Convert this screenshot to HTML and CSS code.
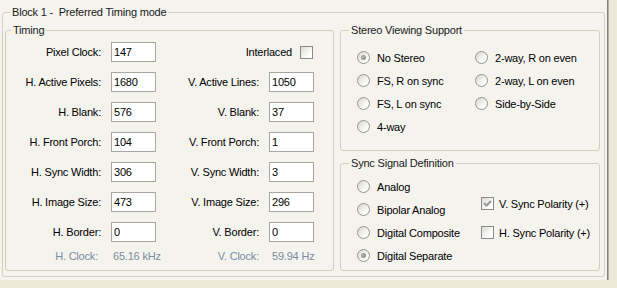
FILE: index.html
```html
<!DOCTYPE html>
<html lang="en">
<head>
    <meta charset="UTF-8">
    <title>Preferred Timing mode</title>
    <link rel="stylesheet" href="styles.css">
</head>
<body>
    <div class="page">
        <fieldset class="group outer">
            <legend>Block 1 -&nbsp; Preferred Timing mode</legend>
            <div class="outer-body">
                <fieldset class="group timing">
                    <legend>Timing</legend>
                    <div class="timing-grid">
                        <label>Pixel Clock:</label>
                        <input type="text" value="147">
                        <div class="interlaced">Interlaced <span class="check"></span></div>

                        <label>H. Active Pixels:</label>
                        <input type="text" value="1680">
                        <label>V. Active Lines:</label>
                        <input type="text" value="1050">

                        <label>H. Blank:</label>
                        <input type="text" value="576">
                        <label>V. Blank:</label>
                        <input type="text" value="37">

                        <label>H. Front Porch:</label>
                        <input type="text" value="104">
                        <label>V. Front Porch:</label>
                        <input type="text" value="1">

                        <label>H. Sync Width:</label>
                        <input type="text" value="306">
                        <label>V. Sync Width:</label>
                        <input type="text" value="3">

                        <label>H. Image Size:</label>
                        <input type="text" value="473">
                        <label>V. Image Size:</label>
                        <input type="text" value="296">

                        <label>H. Border:</label>
                        <input type="text" value="0">
                        <label>V. Border:</label>
                        <input type="text" value="0">

                        <span class="clock clock-label h">H. Clock:</span>
                        <span class="clock clock-value">65.16 kHz</span>
                        <span class="clock clock-label">V. Clock:</span>
                        <span class="clock clock-value v">59.94 Hz</span>
                    </div>
                </fieldset>

                <div class="side">
                    <fieldset class="group stereo">
                        <legend>Stereo Viewing Support</legend>
                        <div class="stereo-grid">
                            <div class="opt"><span class="radio on"></span>No Stereo</div>
                            <div class="opt"><span class="radio"></span>2-way, R on even</div>
                            <div class="opt"><span class="radio"></span>FS, R on sync</div>
                            <div class="opt"><span class="radio"></span>2-way, L on even</div>
                            <div class="opt"><span class="radio"></span>FS, L on sync</div>
                            <div class="opt"><span class="radio"></span>Side-by-Side</div>
                            <div class="opt"><span class="radio"></span>4-way</div>
                        </div>
                    </fieldset>

                    <fieldset class="group sync">
                        <legend>Sync Signal Definition</legend>
                        <div class="sync-body">
                            <div class="sync-radios">
                                <div class="opt"><span class="radio"></span>Analog</div>
                                <div class="opt"><span class="radio"></span>Bipolar Analog</div>
                                <div class="opt"><span class="radio"></span>Digital Composite</div>
                                <div class="opt"><span class="radio on"></span>Digital Separate</div>
                            </div>
                            <div class="sync-checks">
                                <div class="chk"><span class="check on"><svg width="11" height="11" viewBox="0 0 11 11"><polyline points="2,5 4.5,7.5 9,3" fill="none" stroke="#9a9a96" stroke-width="2"/></svg></span>V. Sync Polarity (+)</div>
                                <div class="chk"><span class="check"></span>H. Sync Polarity (+)</div>
                            </div>
                        </div>
                    </fieldset>
                </div>
            </div>
        </fieldset>
    </div>
</body>
</html>
```

FILE: styles.css
```css
body {
    margin: 0;
    background: #ece9d8;
    font-family: 'Liberation Sans', Arial, sans-serif;
    font-size: 11px;
    letter-spacing: -0.2px;
    color: #000;
}
.page {
    width: 607px;
    height: 280px;
    box-sizing: border-box;
    padding: 6px 0 0 2px;
    background: #f4f3ee;
    box-shadow: 1px 0 0 #808080, 2px 0 0 #b0aea4, 0 1px 0 #d6d3c8, 0 2px 0 #a5a39a;
}

/* group boxes */
.group {
    margin: 0;
    padding: 0;
    min-width: 0;
    box-sizing: border-box;
    border: 1px solid #d0d0bf;
    border-radius: 3px;
}
.group legend {
    padding: 0 2px;
    line-height: 13px;
    color: #1a1a1a;
}
.outer { width: 603px; height: 271px; }
.outer legend { margin-left: 7px; }
.outer-body {
    display: flex;
    gap: 6px;
    padding: 5px 4px 0 2px;
}
.timing { width: 329px; height: 247px; }
.timing legend { margin-left: 5px; }
.side {
    display: flex;
    flex-direction: column;
    gap: 6px;
    width: 260px;
}
.stereo { height: 127px; }
.sync { height: 114px; }
.stereo legend, .sync legend { margin-left: 8px; }

/* timing fields */
.timing-grid {
    display: grid;
    grid-template-columns: 95px 45px 93px 45px;
    grid-template-rows: repeat(7, 20px) 14px;
    column-gap: 10px;
    row-gap: 10px;
    padding-top: 5px;
    align-items: center;
}
.timing-grid label { text-align: right; white-space: nowrap; }
.timing-grid input {
    width: 45px;
    height: 20px;
    box-sizing: border-box;
    margin: 0;
    padding: 0 2px;
    border: 1px solid #a9a8a0;
    background: #fff;
    font-family: inherit;
    font-size: 11px;
    letter-spacing: -0.2px;
    color: #000;
    outline: none;
}
.interlaced {
    grid-column: 3 / 5;
    display: flex;
    justify-content: flex-end;
    align-items: center;
    gap: 8px;
    padding-right: 1px;
}
.clock {
    color: #7a8ca2;
    white-space: nowrap;
    margin-top: -6px;
}
.clock-label { text-align: right; }
.clock-label.h { padding-right: 3px; }
.clock-value { padding-left: 2px; }
.clock-value.v { padding-left: 3px; }

/* radios and checks */
.opt, .chk {
    display: flex;
    align-items: center;
    white-space: nowrap;
}
.opt { height: 23px; }
.radio {
    width: 13px;
    height: 13px;
    box-sizing: border-box;
    margin-right: 7px;
    border: 1px solid #94948e;
    border-radius: 50%;
    background: linear-gradient(135deg, #d8d6cd, #fbfbf9 70%);
    position: relative;
}
.radio.on::after {
    content: "";
    position: absolute;
    left: 3px;
    top: 3px;
    width: 5px;
    height: 5px;
    border-radius: 50%;
    background: radial-gradient(circle at 40% 40%, #b4b4b0, #7c7c78);
}
.check {
    width: 13px;
    height: 13px;
    box-sizing: border-box;
    border: 1px solid #8c8c86;
    background: linear-gradient(135deg, #dcdbd3, #fff 75%);
    display: inline-block;
}
.check svg { display: block; }
.stereo-grid {
    display: grid;
    grid-template-columns: 118px auto;
    padding: 9px 0 0 16px;
}
.sync-body {
    display: flex;
    padding: 5px 0 0 16px;
}
.sync-radios { width: 124px; }
.sync-checks {
    display: flex;
    flex-direction: column;
    gap: 14px;
    padding-top: 21px;
}
.chk { height: 15px; }
.chk .check { margin-right: 5px; }
```
